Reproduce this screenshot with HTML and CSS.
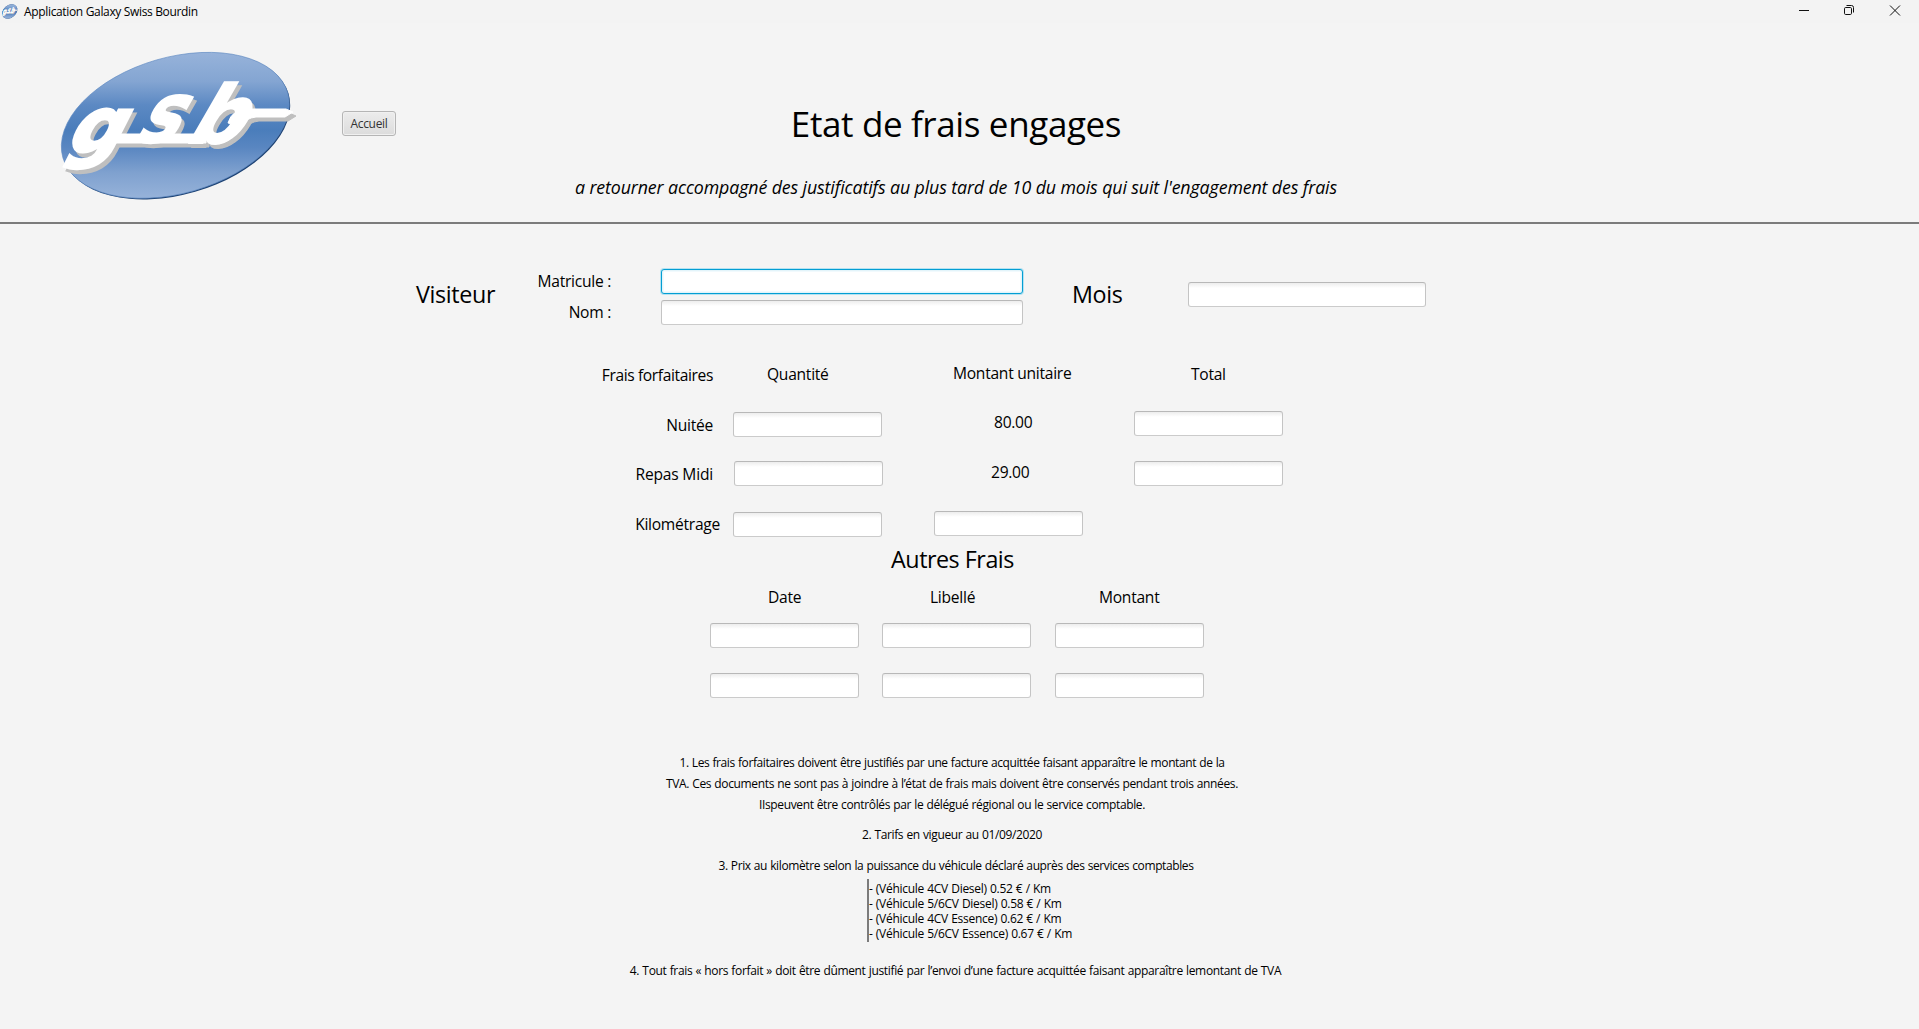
FILE: index.html
```
<!DOCTYPE html>
<html lang="fr">
<head>
<meta charset="utf-8">
<title>Application Galaxy Swiss Bourdin</title>
<link rel="stylesheet" href="styles.css">
</head>
<body>
<div class="titlebar">
  <svg class="app-icon" viewBox="0 0 240 152" preserveAspectRatio="none"><use href="#gsb-logo"/></svg>
  <span class="app-title">Application Galaxy Swiss Bourdin</span>
  <svg class="window-controls" width="102" height="12" viewBox="0 0 102 12" fill="none" stroke="#111">
    <path d="M0 5.5H10"/>
    <rect x="45.5" y="2.5" width="7" height="7" rx="1.2"/>
    <path d="M47.5 .5H52.5Q54.5 .5 54.5 2.5V7.5"/>
    <path d="M91 .5L101 10.500M101 .5L91 10.500"/>
  </svg>
</div>

<header class="header">
  <svg class="logo" width="240" height="152" viewBox="0 0 240 152">
    <defs>
      <linearGradient id="oval" gradientUnits="userSpaceOnUse" x1="115.300" y1="2" x2="115.300" y2="149" gradientTransform="rotate(16.1 115.3 75.3)">
        <stop offset="0" stop-color="#97b3da"/>
        <stop offset=".2" stop-color="#84a5d2"/>
        <stop offset=".36" stop-color="#5c89c3"/>
        <stop offset=".53" stop-color="#4a7dbb"/>
        <stop offset=".65" stop-color="#5986c1"/>
        <stop offset=".82" stop-color="#7fa1cf"/>
        <stop offset="1" stop-color="#97b3da"/>
      </linearGradient>
      <g id="wordmark">
        <text class="mark" font-size="77" stroke-width="3" transform="translate(3 101.500) skewX(-27) scale(.98 1)">g</text>
        <text class="mark" font-size="84" stroke-width="2" transform="translate(72 92) skewX(-30) scale(.82 1)">s</text>
        <text class="mark" font-size="80" stroke-width="2" transform="translate(123 92.500) skewX(-30) scale(.95 1)">b</text>
        <path d="M50 84H146V93H48Z"/>
        <path d="M168 73Q172 59 188 59H226L233 62L225 67H196Q186 68 180 76Z"/>
      </g>
    </defs>
    <g id="gsb-logo">
      <ellipse cx="116.200" cy="76.300" rx="117" ry="68.200" transform="rotate(-16.1 116.2 76.3)" fill="#1d4273"/>
      <ellipse cx="115.300" cy="75.300" rx="117" ry="68" transform="rotate(-16.1 115.3 75.3)" fill="url(#oval)" stroke="#5f8ac2" stroke-width=".6"/>
      <use href="#wordmark" x="3" y="4" fill="#bfbfbf" stroke="#bfbfbf"/>
      <use href="#wordmark" fill="#fff" stroke="#fff"/>
    </g>
  </svg>
  <button class="home-button">Accueil</button>
  <div class="headings">
    <h1>Etat de frais engages</h1>
    <p>a retourner accompagné des justificatifs au plus tard de 10 du mois qui suit l'engagement des frais</p>
  </div>
</header>

<main>
  <section class="identity">
    <h2 class="visitor">Visiteur</h2>
    <div class="identity-labels"><label>Matricule :</label><label>Nom :</label></div>
    <div class="identity-fields"><input class="focused"><input></div>
    <h2 class="month">Mois</h2>
    <input class="month-field">
  </section>

  <section class="fixed-costs">
    <span class="row-label col-title">Frais forfaitaires</span><span class="quantity-title">Quantité</span><span class="unit-title">Montant unitaire</span><span class="total-title">Total</span>
    <span class="row-label">Nuitée</span><input class="low"><span class="price">80.00</span><input>
    <span class="row-label repas">Repas Midi</span><input class="shifted"><span class="price second">29.00</span><input>
    <span class="row-label km">Kilométrage</span><input class="low"><input>
  </section>

  <section class="other-costs">
    <h2>Autres Frais</h2>
    <div class="other-grid">
      <span class="date">Date</span><span class="wording">Libellé</span><span class="amount">Montant</span>
      <input><input><input>
      <input><input><input>
    </div>
  </section>

  <section class="notes">
    <p class="line first">1. Les frais forfaitaires doivent être justifiés par une facture acquittée faisant apparaître le montant de la</p>
    <p class="line">TVA. Ces documents ne sont pas à joindre à l’état de frais mais doivent être conservés pendant trois années.</p>
    <p class="line">IIspeuvent être contrôlés par le délégué régional ou le service comptable.</p>
    <p class="rates-date">2. Tarifs en vigueur au 01/09/2020</p>
    <p class="km-price">3. Prix au kilomètre selon la puissance du véhicule déclaré auprès des services comptables</p>
    <ul>
      <li>- (Véhicule 4CV Diesel) 0.52 € / Km</li>
      <li>- (Véhicule 5/6CV Diesel) 0.58 € / Km</li>
      <li>- (Véhicule 4CV Essence) 0.62 € / Km</li>
      <li>- (Véhicule 5/6CV Essence) 0.67 € / Km</li>
    </ul>
    <p class="proof">4. Tout frais « hors forfait » doit être dûment justifié par l’envoi d’une facture acquittée faisant apparaître lemontant de TVA</p>
  </section>
</main>
</body>
</html>
```
FILE: styles.css
```
* { box-sizing: border-box; margin: 0; padding: 0; }

body {
  height: 1029px;
  overflow: hidden;
  background: #f4f4f4;
  color: #000;
  font: 15.6px/20px "Open Sans", "Noto Sans", sans-serif;
  letter-spacing: -.27px;
  white-space: nowrap;
}

h2 { font-size: 23.3px; line-height: 30px; font-weight: 400; letter-spacing: -.36px; }

input {
  display: block;
  width: 149px;
  height: 25px;
  border: 1px solid #c4c4c4;
  border-top-color: #b8b8b8;
  border-bottom-color: #cbcbcb;
  border-radius: 3px;
  background: linear-gradient(#ededed, #fff 5px);
  outline: none;
}

input.focused {
  border-color: #039ed3;
  background: #fff;
  box-shadow: 0 0 0 1px #b5e2f1, inset 0 0 0 1px #e3f4fa, inset 0 0 0 2px #f2fafd;
}

/* Window title bar */
.titlebar { display: flex; height: 23px; background: #f3f3f3; }
.app-icon { width: 16px; height: 15px; margin: 4px 0 0 2px; overflow: visible; }
.app-title { margin: 4px 0 0 6px; font-size: 12px; line-height: 15px; letter-spacing: -.34px; }
.window-controls { margin: 5px 18px 0 auto; }

/* Header */
.header { display: flex; align-items: flex-start; height: 201px; border-bottom: 2px solid #7b7b7b; }
.logo { margin: 27px 0 0 60px; overflow: visible; }
.mark { font-family: "DejaVu Sans", sans-serif; font-weight: 700; letter-spacing: 0; }
.home-button {
  width: 54px;
  height: 25px;
  margin: 88px 0 0 42px;
  border: 1px solid #b5b5b5;
  border-radius: 3px;
  background: linear-gradient(#ececec, #dcdcdc);
  box-shadow: inset 0 0 0 1px #f0f0f0;
  color: #333;
  font: 12px/15px "Open Sans", sans-serif;
  letter-spacing: -.3px;
}
.headings { width: 764px; margin: 78px 0 0 178px; text-align: center; }
.headings h1 { font-size: 35px; line-height: 46px; font-weight: 400; letter-spacing: -.37px; }
.headings p { margin-top: 28px; font-size: 17.8px; line-height: 24px; font-style: italic; letter-spacing: -.12px; }

/* Visitor and month */
.identity { display: flex; align-items: flex-start; padding: 45px 0 0 416px; height: 101px; }
.identity h2 { margin-top: 10px; }
.visitor { width: 79px; }
.identity-labels { display: grid; gap: 11px; width: 116px; margin: 2px 50px 0 0; text-align: right; }
.identity-fields { display: grid; gap: 6px; width: 362px; }
.identity-fields input { width: 100%; }
.month { width: 116px; margin-left: 49px; }
.month-field { width: 238px; margin-top: 13px; }

/* Fixed-rate costs */
.fixed-costs {
  display: grid;
  grid-template-columns: 131px 201px 200px 149px;
  grid-template-rows: 48px 50px 50px 33px;
  align-items: start;
  margin: 38px 0 0 602px;
}
.row-label { margin: 4px 20px 0 0; text-align: right; }
.row-label.col-title { margin: 2px 20px 0 -1px; letter-spacing: -.38px; }
.row-label.repas { margin-top: 3px; letter-spacing: -.2px; }
.row-label.km { margin: 3px 13px 0 0; }
.quantity-title { margin: 1px 0 0 34px; }
.unit-title { margin-left: 19px; }
.total-title { margin: 1px 0 0 57px; }
.low { margin-top: 1px; }
.shifted { margin-left: 1px; }
.price { margin: 1px 0 0 60px; }
.price.second { margin-left: 57px; }

/* Other costs */
.other-costs { margin-left: 710px; }
.other-costs h2 { width: 485px; text-align: center; letter-spacing: -.48px; }
.other-grid {
  display: grid;
  grid-template-columns: 172px 173px 149px;
  grid-template-rows: 36px 50px 25px;
  align-items: start;
  margin-top: 13px;
}
.date { margin-left: 58px; }
.wording { margin-left: 48px; }
.amount { margin-left: 44px; }

/* Notes */
.notes { width: 700px; margin: 54px 0 0 602px; font-size: 12px; line-height: 15px; text-align: center; letter-spacing: -.36px; word-spacing: .4px; }
.notes .line { line-height: 21px; }
.notes .line.first { letter-spacing: -.395px; }
.rates-date { margin-top: 12px; }
.km-price { margin: 16px -8px 0 0; letter-spacing: -.39px; }
.notes ul { width: 240px; height: 63px; margin: 6px 0 0 265px; padding-top: 2px; border-left: 2px solid #7b7b7b; list-style: none; text-align: left; letter-spacing: -.28px; }
.proof { margin: 21px -7px 0 0; letter-spacing: -.335px; }
```
